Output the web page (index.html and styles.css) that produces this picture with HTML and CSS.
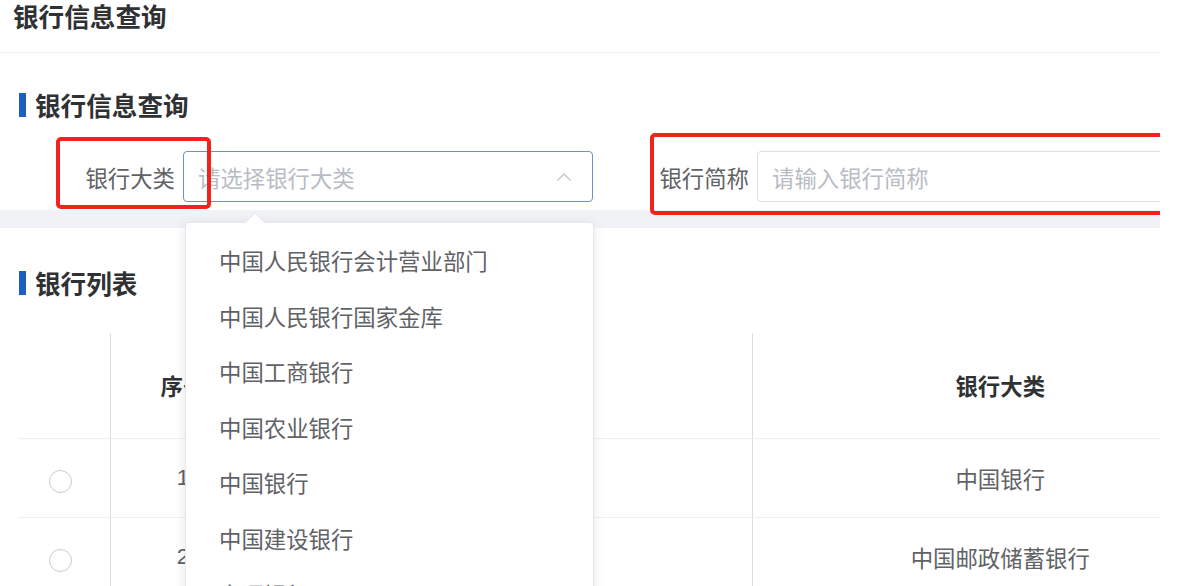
FILE: index.html
```html
<!DOCTYPE html>
<html lang="zh-CN">
<head>
<meta charset="utf-8">
<title>银行信息查询</title>
<link rel="stylesheet" href="styles.css">
</head>
<body>
<div class="page">
  <div class="page-title">银行信息查询</div>

  <div class="card card-query">
    <div class="section-title"><span class="bar"></span>银行信息查询</div>
    <div class="form-row">
      <div class="form-item">
        <label class="form-label">银行大类</label>
        <div class="select is-focus">
          <span class="placeholder">请选择银行大类</span>
          <svg class="select-arrow" width="16" height="10" viewBox="0 0 16 10"><path d="M1.5 8.5 L8 2 L14.5 8.5" fill="none" stroke="#c0c4cc" stroke-width="1.4"/></svg>
        </div>
      </div>
      <div class="form-item">
        <label class="form-label">银行简称</label>
        <div class="input"><span class="placeholder">请输入银行简称</span></div>
      </div>
    </div>
  </div>

  <div class="band"></div>

  <div class="card card-list">
    <div class="section-title"><span class="bar"></span>银行列表</div>
    <div class="table-wrap">
      <table class="table">
        <colgroup>
          <col class="c-radio"><col class="c-index"><col class="c-code"><col class="c-type">
        </colgroup>
        <thead>
          <tr><th></th><th class="bl">序号</th><th class="bl">银行代码</th><th class="bl">银行大类</th></tr>
        </thead>
        <tbody>
          <tr><td><span class="radio"></span></td><td class="bl num">1</td><td class="bl num">104</td><td class="bl">中国银行</td></tr>
          <tr><td><span class="radio"></span></td><td class="bl num">2</td><td class="bl num">403</td><td class="bl">中国邮政储蓄银行</td></tr>
        </tbody>
      </table>
    </div>
  </div>

  <div class="mark mark-1"></div>
  <div class="mark mark-2"></div>

  <div class="dropdown">
    <span class="dropdown-arrow"></span>
    <ul class="dropdown-list">
      <li>中国人民银行会计营业部门</li>
      <li>中国人民银行国家金库</li>
      <li>中国工商银行</li>
      <li>中国农业银行</li>
      <li>中国银行</li>
      <li>中国建设银行</li>
      <li>交通银行</li>
    </ul>
  </div>
</div>
</body>
</html>
```

FILE: styles.css
```css
* { box-sizing: border-box; }
html, body {
  margin: 0;
  padding: 0;
  background: #ffffff;
  overflow: hidden;
  height: 586px;
}
body {
  font-family: "Noto Sans CJK SC", "Noto Sans", sans-serif;
  color: #606266;
  font-size: 22.4px;
}
.page {
  position: relative;
  width: 1160px;
  height: 586px;
  overflow: hidden;
  background: #ffffff;
}
.page-title {
  height: 53px;
  padding-top: 1px;
  padding-left: 13px;
  line-height: 30px;
  font-size: 25.6px;
  font-weight: 700;
  color: #303133;
  border-bottom: 1px solid #ebeef5;
}
.card { background: #ffffff; }
.card-query { padding: 37px 0 8px; }
.section-title {
  display: flex;
  align-items: center;
  height: 30px;
  padding-left: 19px;
  font-size: 25.6px;
  font-weight: 700;
  color: #303133;
  line-height: 30px;
}
.section-title .bar {
  width: 7px;
  height: 24px;
  background: #1c5fc0;
  margin-right: 9px;
}
.form-row {
  display: flex;
  gap: 36px;
  margin-top: 31px;
  padding-left: 55px;
}
.form-item {
  display: flex;
  align-items: center;
  height: 51px;
}
.form-label {
  width: 128px;
  padding-right: 8px;
  text-align: right;
  color: #606266;
  font-size: 22.4px;
}
.select, .input {
  position: relative;
  width: 410px;
  height: 51px;
  border: 1px solid #dcdfe6;
  border-radius: 4px;
  display: flex;
  align-items: center;
  padding-left: 14px;
  background: #fff;
}
.select.is-focus { border-color: #6b92c2; }
.placeholder { color: #b8bcc4; font-size: 22.4px; }
.select-arrow {
  position: absolute;
  right: 20px;
  top: 20px;
}
.band {
  height: 18px;
  background: #f0f2f5;
}
.card-list { padding-top: 40px; }
.table-wrap {
  margin-top: 35px;
  margin-left: 18px;
  width: 1142px;
  overflow: hidden;
}
.table {
  border-collapse: collapse;
  table-layout: fixed;
  width: 1230px;
}
.c-radio { width: 92px; }
.c-index { width: 146px; }
.c-code { width: 496px; }
.c-type { width: 496px; }
.table th {
  height: 105px;
  font-weight: 700;
  color: #303133;
  font-size: 22.4px;
  text-align: center;
  border-bottom: 1px solid #ebeef5;
}
.table td {
  height: 79px;
  text-align: center;
  color: #606266;
  font-size: 22.4px;
  border-bottom: 1px solid #ebeef5;
}
.table .num { font-family: "Liberation Sans", "Noto Sans", sans-serif; }
.table .bl { border-left: 1px solid #dcdcdc; }
.radio {
  display: inline-block;
  width: 23px;
  height: 23px;
  border: 1px solid #c8cbd0;
  border-radius: 50%;
  vertical-align: middle;
  margin-left: -6px;
}
.mark {
  position: absolute;
  border: 4px solid #f2231c;
  border-radius: 5px;
}
.mark-1 { left: 56px; top: 137px; width: 155px; height: 72px; }
.mark-2 { left: 650px; top: 133px; width: 530px; height: 82px; }
.dropdown {
  position: absolute;
  left: 185px;
  top: 222px;
  width: 409px;
  height: 420px;
  background: #fff;
  border: 1px solid #e4e7ed;
  border-radius: 4px;
  box-shadow: 0 2px 12px rgba(0, 0, 0, 0.1);
}
.dropdown-arrow {
  position: absolute;
  left: 62px;
  top: -8px;
  width: 14px;
  height: 14px;
  background: #fff;
  border-left: 1px solid #e4e7ed;
  border-top: 1px solid #e4e7ed;
  transform: rotate(45deg);
}
.dropdown-list {
  list-style: none;
  margin: 0;
  padding: 10px 0 0;
}
.dropdown-list li {
  height: 55.6px;
  line-height: 55.6px;
  padding-left: 33px;
  color: #606266;
  font-size: 22.4px;
  white-space: nowrap;
}
```
